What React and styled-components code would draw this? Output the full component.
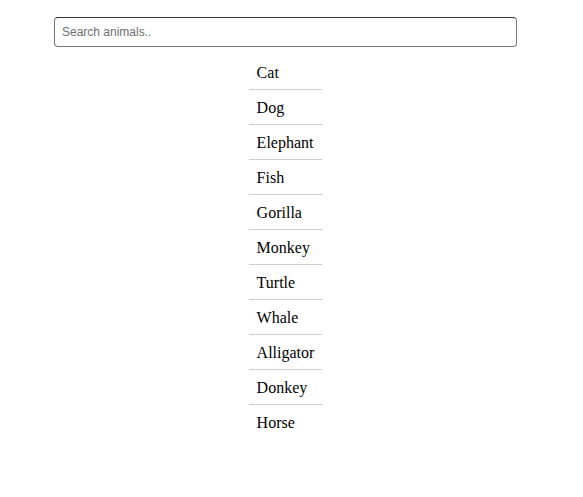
import React, { useState } from "react";
import styled, { createGlobalStyle } from "styled-components";

const Global = createGlobalStyle`
  body { margin: 0; background: #fff; font-family: "Liberation Serif", "Times New Roman", serif; }
`;

const Page = styled.div`
  width: 571px;
  padding-top: 17px;
  display: flex;
  flex-direction: column;
  align-items: center;
`;

const SearchInput = styled.input`
  box-sizing: border-box;
  width: 463px;
  height: 30px;
  padding: 0 7px;
  border: 1px solid #767676;
  border-top-color: #333;
  border-radius: 4px;
  font-family: "Liberation Sans", Arial, sans-serif;
  font-size: 12px;
  color: #222;
  outline: none;
  &::placeholder { color: #6f6f6f; }
`;

const List = styled.ul`
  list-style: none;
  margin: 8px 0 0;
  padding: 0;
`;

const Item = styled.li`
  padding: 9px 8px 7px;
  font-size: 16px;
  line-height: 18px;
  color: #000;
  border-bottom: 1px solid #ccc;
  &:last-child { border-bottom: none; }
`;

const animals = ["Cat", "Dog", "Elephant", "Fish", "Gorilla", "Monkey", "Turtle", "Whale", "Alligator", "Donkey", "Horse"];

export default function App() {
  const [q, setQ] = useState("");
  const shown = animals.filter((a) => a.toLowerCase().includes(q.toLowerCase()));
  return (
    <>
      <Global />
      <Page>
        <SearchInput placeholder="Search animals.." value={q} onChange={(e) => setQ(e.target.value)} />
        <List>
          {shown.map((a) => (
            <Item key={a}>{a}</Item>
          ))}
        </List>
      </Page>
    </>
  );
}
